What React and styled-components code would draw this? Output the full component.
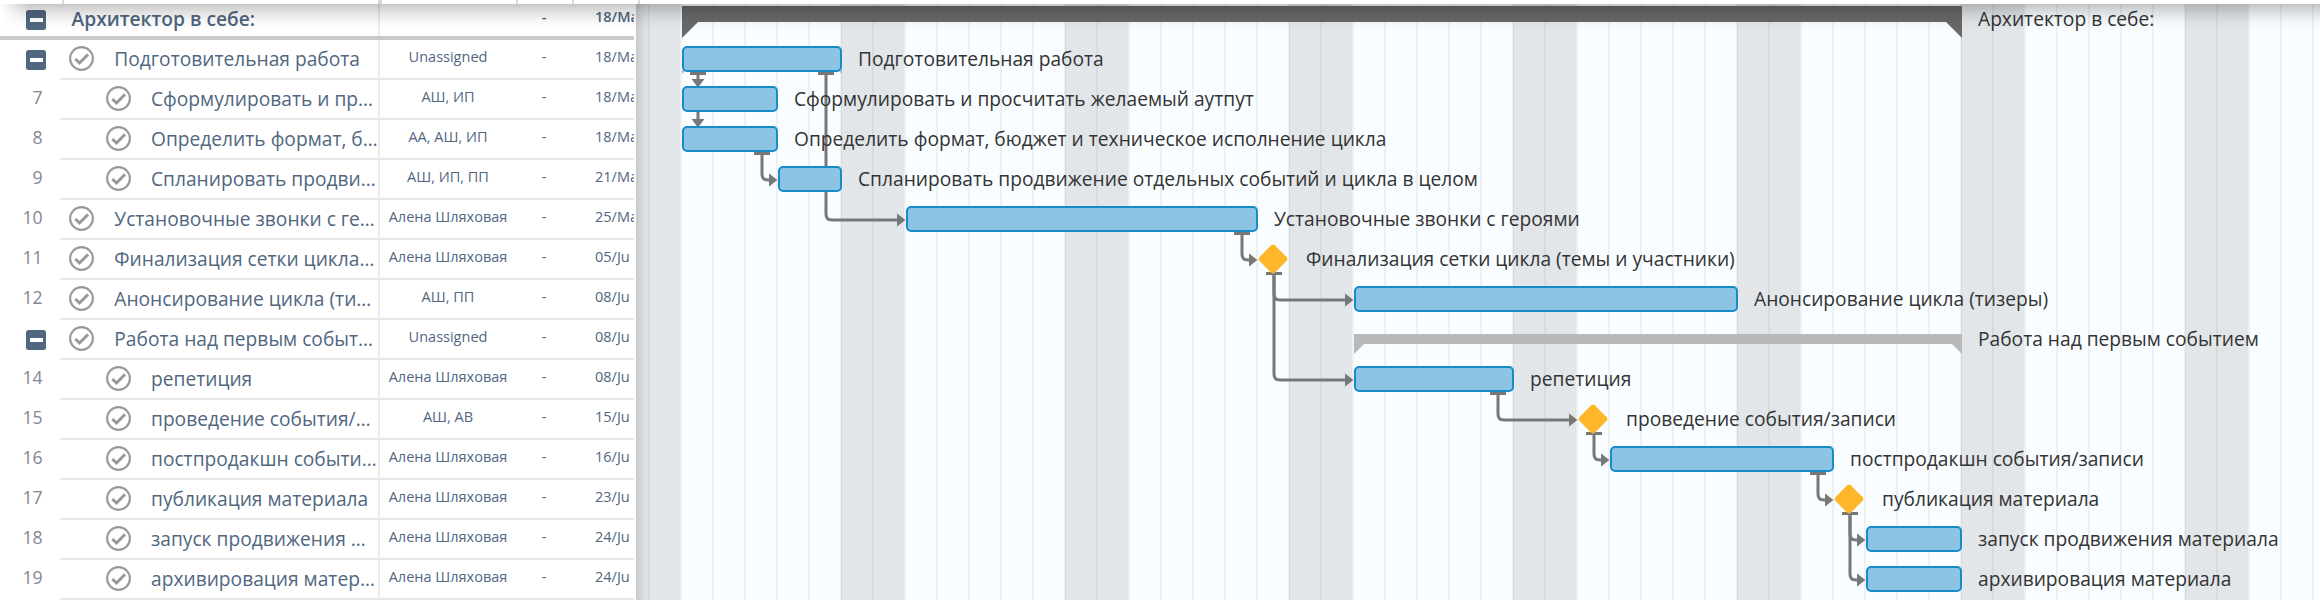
import React from "react";
import styled, { createGlobalStyle, css } from "styled-components";

const GlobalStyle = createGlobalStyle`
  body { margin: 0; background: #fff; overflow: hidden; }
  * { box-sizing: border-box; }
`;

const ORIGIN = 636;

const tasks = [
  { toggle: true, root: true, name: "Архитектор в себе:", who: "", date: "18/Ma", label: "Архитектор в себе:", kind: "summary", from: 682, to: 1962 },
  { toggle: true, level: 1, name: "Подготовительная работа", who: "Unassigned", date: "18/Ma", label: "Подготовительная работа", kind: "bar", from: 682, to: 842 },
  { num: 7, level: 2, name: "Сформулировать и пр…", who: "АШ, ИП", date: "18/Ma", label: "Сформулировать и просчитать желаемый аутпут", kind: "bar", from: 682, to: 778 },
  { num: 8, level: 2, name: "Определить формат, б…", who: "АА, АШ, ИП", date: "18/Ma", label: "Определить формат, бюджет и техническое исполнение цикла", kind: "bar", from: 682, to: 778 },
  { num: 9, level: 2, name: "Спланировать продви…", who: "АШ, ИП, ПП", date: "21/Ma", label: "Спланировать продвижение отдельных событий и цикла в целом", kind: "bar", from: 778, to: 842 },
  { num: 10, level: 1, name: "Установочные звонки с ге…", who: "Алена Шляховая", date: "25/Ma", label: "Установочные звонки с героями", kind: "bar", from: 906, to: 1258 },
  { num: 11, level: 1, name: "Финализация сетки цикла…", who: "Алена Шляховая", date: "05/Ju", label: "Финализация сетки цикла (темы и участники)", kind: "milestone", from: 1258, to: 1290 },
  { num: 12, level: 1, name: "Анонсирование цикла (ти…", who: "АШ, ПП", date: "08/Ju", label: "Анонсирование цикла (тизеры)", kind: "bar", from: 1354, to: 1738 },
  { toggle: true, level: 1, name: "Работа над первым событ…", who: "Unassigned", date: "08/Ju", label: "Работа над первым событием", kind: "group", from: 1354, to: 1962 },
  { num: 14, level: 2, name: "репетиция", who: "Алена Шляховая", date: "08/Ju", label: "репетиция", kind: "bar", from: 1354, to: 1514 },
  { num: 15, level: 2, name: "проведение события/…", who: "АШ, АВ", date: "15/Ju", label: "проведение события/записи", kind: "milestone", from: 1578, to: 1610 },
  { num: 16, level: 2, name: "постпродакшн событи…", who: "Алена Шляховая", date: "16/Ju", label: "постпродакшн события/записи", kind: "bar", from: 1610, to: 1834 },
  { num: 17, level: 2, name: "публикация материала", who: "Алена Шляховая", date: "23/Ju", label: "публикация материала", kind: "milestone", from: 1834, to: 1866 },
  { num: 18, level: 2, name: "запуск продвижения …", who: "Алена Шляховая", date: "24/Ju", label: "запуск продвижения материала", kind: "bar", from: 1866, to: 1962 },
  { num: 19, level: 2, name: "архивировация матер…", who: "Алена Шляховая", date: "24/Ju", label: "архивировация материала", kind: "bar", from: 1866, to: 1962 },
];

/* x: stem position, y: bottom of the source bar, ty: centre of the target, tx: left edge of the target */
const elbows = [
  { x: 762, y: 152, tx: 778, ty: 180 },
  { x: 826, y: 72, tx: 906, ty: 220 },
  { x: 1242, y: 232, tx: 1258, ty: 260 },
  { x: 1274, y: 272, tx: 1354, ty: 300 },
  { x: 1274, y: 272, tx: 1354, ty: 380 },
  { x: 1498, y: 392, tx: 1578, ty: 420 },
  { x: 1594, y: 432, tx: 1610, ty: 460 },
  { x: 1818, y: 472, tx: 1834, ty: 500 },
  { x: 1850, y: 512, tx: 1866, ty: 540 },
  { x: 1850, y: 512, tx: 1866, ty: 580 },
];
const drops = [72, 112];

const Page = styled.div`
  position: relative;
  display: flex;
  flex-direction: column;
  width: 2320px;
  height: 600px;
  overflow: hidden;
  background: #fff;
  font-family: "Open Sans", "Noto Sans", sans-serif;
`;
const HeaderEdge = styled.header`
  display: flex;
  flex: none;
  height: 4px;
  background: #fff;
  position: relative;
  z-index: 3;
`;
const HeaderCell = styled.div`
  flex: none;
  width: ${(p) => p.$width}px;
  border-right: ${(p) => p.$line || 2}px solid #d9d9d9;
`;
const HeaderShadow = styled.div`
  position: absolute;
  z-index: 2;
  top: 4px;
  left: 0;
  right: 0;
  height: 26px;
  pointer-events: none;
  background: linear-gradient(rgba(0, 0, 0, 0.22), rgba(0, 0, 0, 0.12) 30%, rgba(0, 0, 0, 0.035) 65%, transparent);
  mask-image: linear-gradient(90deg, transparent, #000 28px);
`;
const Body = styled.main`
  display: flex;
  flex: none;
  height: 600px;
  margin-top: -4px;
`;
const Grid = styled.section`
  flex: none;
  width: ${ORIGIN}px;
  padding-right: 2px;
  background: #fff;
`;
const GridRow = styled.div`
  display: flex;
  height: 40px;
  overflow: hidden;
  color: #50677f;
  ${(p) =>
    p.$root &&
    css`
      font-weight: 600;
      border-bottom: 4px solid #c9c9c9;
    `}
`;
const Gutter = styled.div`
  flex: none;
  width: 60px;
  padding: 10px 14px 0 0;
  display: flex;
  justify-content: flex-end;
`;
const Num = styled.span`
  margin: -10px 3.5px 0 0;
  font-size: 17.6px;
  line-height: 34px;
  color: #7f8894;
`;
const Toggle = styled.span`
  display: flex;
  align-items: center;
  justify-content: center;
  width: 20px;
  height: 20px;
  border-radius: 2.5px;
  background: #50677f;
  &::before {
    content: "";
    width: 13px;
    height: 4px;
    background: #fff;
  }
`;
const Cells = styled.div`
  display: flex;
  flex: 1;
  min-width: 0;
  border-bottom: ${(p) => (p.$root ? "0" : "2px solid #e8e8e8")};
`;
const indent = { 0: 11.5, 1: 9, 2: 45.7 };
const NameCell = styled.div`
  display: flex;
  flex: none;
  width: 320px;
  padding-left: ${(p) => indent[p.$level || 0]}px;
  border-right: 2px solid #ececec;
  white-space: nowrap;
`;
const Name = styled.span`
  font-size: 19.2px;
  line-height: 38px;
`;
const CheckSvg = styled.svg`
  flex: none;
  width: 25px;
  height: 25px;
  margin: 6px 20.3px 0 0;
  fill: none;
  stroke: #999;
`;
const Cell = styled.div`
  flex: none;
  width: ${(p) => p.$width}px;
  text-align: center;
  font-size: 14.5px;
  line-height: 34px;
  white-space: nowrap;
`;
const DateCell = styled(Cell)`
  text-align: left;
  padding-left: 23px;
  overflow: hidden;
`;
const Chart = styled.section`
  position: relative;
  flex: 1;
  min-width: 0;
  overflow: hidden;
  background:
    linear-gradient(90deg, rgba(0, 0, 0, 0.13), rgba(0, 0, 0, 0.04) 7px, transparent 14px),
    repeating-linear-gradient(90deg, transparent 0 12px, rgba(0, 0, 0, 0.048) 12px 14px, transparent 14px 32px),
    repeating-linear-gradient(90deg, #e2e6e9 0 44px, #f9fdff 44px 205px, #e2e6e9 205px 224px);
`;
const Links = styled.svg`
  position: absolute;
  left: 0;
  top: 0;
  fill: none;
  stroke: #777;
  stroke-width: 3;
`;
const ChartRow = styled.div`
  position: relative;
  display: flex;
  align-items: flex-start;
  height: 40px;
`;
const Bar = styled.div`
  flex: none;
  height: 26px;
  margin-top: 6px;
  border: 2px solid #178bca;
  border-radius: 5px;
  background: #8cc4e3;
`;
const Summary = styled.div`
  flex: none;
  height: ${(p) => (p.$group ? 20 : 32)}px;
  margin-top: ${(p) => (p.$group ? 14 : 6)}px;
  background: ${(p) => (p.$group ? "#b9b9b9" : "#696969")};
  clip-path: ${(p) =>
    p.$group
      ? "polygon(0 0, 100% 0, 100% 20px, calc(100% - 10px) 10px, 10px 10px, 0 20px)"
      : "polygon(0 0, 100% 0, 100% 32px, calc(100% - 16px) 16px, 16px 16px, 0 32px)"};
`;
const Slot = styled.div`
  display: flex;
  flex: none;
  justify-content: center;
  padding: 8px 1.5px 0 0;
`;
const Diamond = styled.div`
  width: 22px;
  height: 22px;
  border-radius: 3px;
  background: #ffb62b;
  transform: rotate(45deg);
`;
const Label = styled.span`
  margin-left: 16px;
  font-size: 19.2px;
  line-height: 38px;
  white-space: nowrap;
  color: #333;
`;

const Check = () => (
  <CheckSvg viewBox="0 0 25 25">
    <circle cx="12.5" cy="12.5" r="11.4" strokeWidth="2.1" />
    <path d="M6.4 13 10.5 17 19 8.4" strokeWidth="3" />
  </CheckSvg>
);

function Mark({ task }) {
  const size = { width: task.to - task.from };
  if (task.kind === "bar") return <Bar style={size} />;
  if (task.kind === "milestone")
    return (
      <Slot style={size}>
        <Diamond />
      </Slot>
    );
  return <Summary $group={task.kind === "group"} style={size} />;
}

function Connectors() {
  return (
    <Links width="1684" height="600" viewBox={`${ORIGIN} 0 1684 600`}>
      <path d="M682 70V74L685 71ZM842 70V74L839 71Z" fill="#b9b9b9" stroke="none" />
      {drops.map((y) => (
        <g key={y}>
          <path d={`M698 ${y}V${y + 9}`} />
          <path d={`M691.5 ${y + 7}H704.5L698 ${y + 15.5}Z`} fill="#777" stroke="none" />
        </g>
      ))}
      <path d="M690 73.5H706" strokeWidth="3" />
      {elbows.map(({ x, y, tx, ty }) => (
        <g key={`${x}-${ty}`}>
          <path d={`M${x - 8} ${y + 1.5}H${x + 8}`} strokeWidth="3" />
          <path d={`M${x} ${y}V${ty - 6}Q${x} ${ty} ${x + 6} ${ty}H${tx - 8}`} />
          <path d={`M${tx - 9} ${ty - 6.5}V${ty + 6.5}L${tx - 0.5} ${ty}Z`} fill="#777" stroke="none" />
        </g>
      ))}
    </Links>
  );
}

export default function App() {
  return (
    <Page>
      <GlobalStyle />
      <HeaderEdge>
        <HeaderCell $width={64} />
        <HeaderCell $width={318} $line={4} />
        <HeaderCell $width={136} />
        <HeaderCell $width={56} />
        <HeaderCell $width={66} />
      </HeaderEdge>
      <HeaderShadow />
      <Body>
        <Grid>
          {tasks.map((t, i) => (
            <GridRow key={i} $root={t.root}>
              <Gutter>{t.toggle ? <Toggle /> : <Num>{t.num}</Num>}</Gutter>
              <Cells $root={t.root}>
                <NameCell $level={t.level}>
                  {!t.root && <Check />}
                  <Name>{t.name}</Name>
                </NameCell>
                <Cell $width={136}>{t.who}</Cell>
                <Cell $width={56}>-</Cell>
                <DateCell $width={62}>{t.date}</DateCell>
              </Cells>
            </GridRow>
          ))}
        </Grid>
        <Chart>
          <Connectors />
          {tasks.map((t, i) => (
            <ChartRow key={i} style={{ paddingLeft: t.from - ORIGIN }}>
              <Mark task={t} />
              <Label>{t.label}</Label>
            </ChartRow>
          ))}
        </Chart>
      </Body>
    </Page>
  );
}
